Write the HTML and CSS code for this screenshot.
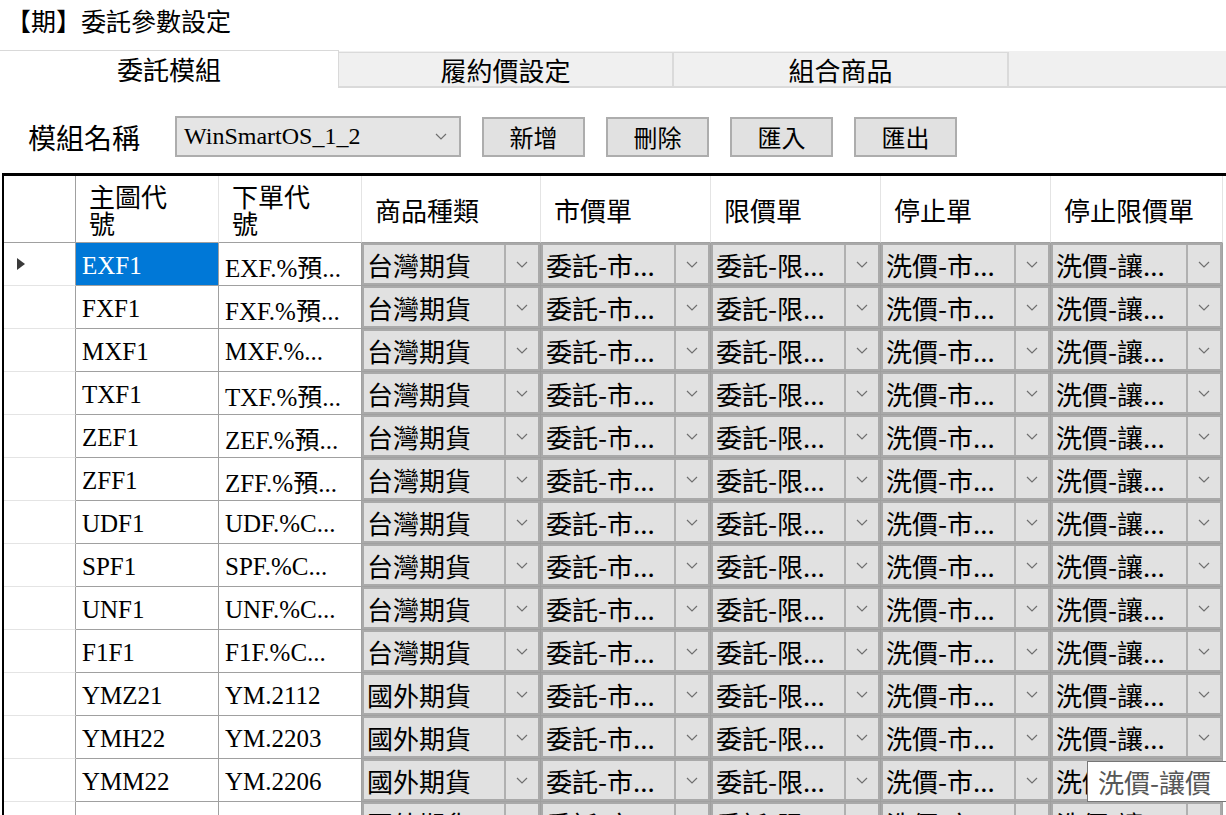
FILE: index.html
```html
<!DOCTYPE html>
<html lang="zh-Hant">
<head>
<meta charset="utf-8">
<title>【期】委託參數設定</title>
<link rel="stylesheet" href="styles.css">
</head>
<body>
<div class="title">【期】委託參數設定</div>
<div class="tabs">
  <div class="tab active">委託模組</div>
  <div class="tabrest">
    <div class="tab">履約價設定</div>
    <div class="tab">組合商品</div>
  </div>
</div>
<div class="toolbar">
  <span class="label">模組名稱</span>
  <div class="select"><span class="select-text">WinSmartOS_1_2</span><svg class="chev" viewBox="0 0 12 7" width="12" height="7"><polyline points="1,1 6,6 11,1"/></svg></div>
  <button class="btn">新增</button>
  <button class="btn">刪除</button>
  <button class="btn">匯入</button>
  <button class="btn">匯出</button>
</div>
<div class="grid">
  <div class="c h rh"></div>
  <div class="c h">主圖代<br>號</div>
  <div class="c h">下單代<br>號</div>
  <div class="c h">商品種類</div>
  <div class="c h">市價單</div>
  <div class="c h">限價單</div>
  <div class="c h">停止單</div>
  <div class="c h">停止限價單</div>

  <div class="c rh"><svg class="rowarrow" viewBox="0 0 8 12" width="8" height="12"><polygon points="0,0 8,6 0,12"/></svg></div>
  <div class="c code sel">EXF1</div>
  <div class="c code">EXF.%預...</div>
  <div class="c cb"><div class="combo"><span class="ct">台灣期貨</span><span class="arr"><svg viewBox="0 0 12 7" width="12" height="7"><polyline points="1,1 6,6 11,1"/></svg></span></div></div>
  <div class="c cb"><div class="combo"><span class="ct">委託-市...</span><span class="arr"><svg viewBox="0 0 12 7" width="12" height="7"><polyline points="1,1 6,6 11,1"/></svg></span></div></div>
  <div class="c cb"><div class="combo"><span class="ct">委託-限...</span><span class="arr"><svg viewBox="0 0 12 7" width="12" height="7"><polyline points="1,1 6,6 11,1"/></svg></span></div></div>
  <div class="c cb"><div class="combo"><span class="ct">洗價-市...</span><span class="arr"><svg viewBox="0 0 12 7" width="12" height="7"><polyline points="1,1 6,6 11,1"/></svg></span></div></div>
  <div class="c cb"><div class="combo"><span class="ct">洗價-讓...</span><span class="arr"><svg viewBox="0 0 12 7" width="12" height="7"><polyline points="1,1 6,6 11,1"/></svg></span></div></div>

  <div class="c rh"></div>
  <div class="c code">FXF1</div>
  <div class="c code">FXF.%預...</div>
  <div class="c cb"><div class="combo"><span class="ct">台灣期貨</span><span class="arr"><svg viewBox="0 0 12 7" width="12" height="7"><polyline points="1,1 6,6 11,1"/></svg></span></div></div>
  <div class="c cb"><div class="combo"><span class="ct">委託-市...</span><span class="arr"><svg viewBox="0 0 12 7" width="12" height="7"><polyline points="1,1 6,6 11,1"/></svg></span></div></div>
  <div class="c cb"><div class="combo"><span class="ct">委託-限...</span><span class="arr"><svg viewBox="0 0 12 7" width="12" height="7"><polyline points="1,1 6,6 11,1"/></svg></span></div></div>
  <div class="c cb"><div class="combo"><span class="ct">洗價-市...</span><span class="arr"><svg viewBox="0 0 12 7" width="12" height="7"><polyline points="1,1 6,6 11,1"/></svg></span></div></div>
  <div class="c cb"><div class="combo"><span class="ct">洗價-讓...</span><span class="arr"><svg viewBox="0 0 12 7" width="12" height="7"><polyline points="1,1 6,6 11,1"/></svg></span></div></div>

  <div class="c rh"></div>
  <div class="c code">MXF1</div>
  <div class="c code">MXF.%...</div>
  <div class="c cb"><div class="combo"><span class="ct">台灣期貨</span><span class="arr"><svg viewBox="0 0 12 7" width="12" height="7"><polyline points="1,1 6,6 11,1"/></svg></span></div></div>
  <div class="c cb"><div class="combo"><span class="ct">委託-市...</span><span class="arr"><svg viewBox="0 0 12 7" width="12" height="7"><polyline points="1,1 6,6 11,1"/></svg></span></div></div>
  <div class="c cb"><div class="combo"><span class="ct">委託-限...</span><span class="arr"><svg viewBox="0 0 12 7" width="12" height="7"><polyline points="1,1 6,6 11,1"/></svg></span></div></div>
  <div class="c cb"><div class="combo"><span class="ct">洗價-市...</span><span class="arr"><svg viewBox="0 0 12 7" width="12" height="7"><polyline points="1,1 6,6 11,1"/></svg></span></div></div>
  <div class="c cb"><div class="combo"><span class="ct">洗價-讓...</span><span class="arr"><svg viewBox="0 0 12 7" width="12" height="7"><polyline points="1,1 6,6 11,1"/></svg></span></div></div>

  <div class="c rh"></div>
  <div class="c code">TXF1</div>
  <div class="c code">TXF.%預...</div>
  <div class="c cb"><div class="combo"><span class="ct">台灣期貨</span><span class="arr"><svg viewBox="0 0 12 7" width="12" height="7"><polyline points="1,1 6,6 11,1"/></svg></span></div></div>
  <div class="c cb"><div class="combo"><span class="ct">委託-市...</span><span class="arr"><svg viewBox="0 0 12 7" width="12" height="7"><polyline points="1,1 6,6 11,1"/></svg></span></div></div>
  <div class="c cb"><div class="combo"><span class="ct">委託-限...</span><span class="arr"><svg viewBox="0 0 12 7" width="12" height="7"><polyline points="1,1 6,6 11,1"/></svg></span></div></div>
  <div class="c cb"><div class="combo"><span class="ct">洗價-市...</span><span class="arr"><svg viewBox="0 0 12 7" width="12" height="7"><polyline points="1,1 6,6 11,1"/></svg></span></div></div>
  <div class="c cb"><div class="combo"><span class="ct">洗價-讓...</span><span class="arr"><svg viewBox="0 0 12 7" width="12" height="7"><polyline points="1,1 6,6 11,1"/></svg></span></div></div>

  <div class="c rh"></div>
  <div class="c code">ZEF1</div>
  <div class="c code">ZEF.%預...</div>
  <div class="c cb"><div class="combo"><span class="ct">台灣期貨</span><span class="arr"><svg viewBox="0 0 12 7" width="12" height="7"><polyline points="1,1 6,6 11,1"/></svg></span></div></div>
  <div class="c cb"><div class="combo"><span class="ct">委託-市...</span><span class="arr"><svg viewBox="0 0 12 7" width="12" height="7"><polyline points="1,1 6,6 11,1"/></svg></span></div></div>
  <div class="c cb"><div class="combo"><span class="ct">委託-限...</span><span class="arr"><svg viewBox="0 0 12 7" width="12" height="7"><polyline points="1,1 6,6 11,1"/></svg></span></div></div>
  <div class="c cb"><div class="combo"><span class="ct">洗價-市...</span><span class="arr"><svg viewBox="0 0 12 7" width="12" height="7"><polyline points="1,1 6,6 11,1"/></svg></span></div></div>
  <div class="c cb"><div class="combo"><span class="ct">洗價-讓...</span><span class="arr"><svg viewBox="0 0 12 7" width="12" height="7"><polyline points="1,1 6,6 11,1"/></svg></span></div></div>

  <div class="c rh"></div>
  <div class="c code">ZFF1</div>
  <div class="c code">ZFF.%預...</div>
  <div class="c cb"><div class="combo"><span class="ct">台灣期貨</span><span class="arr"><svg viewBox="0 0 12 7" width="12" height="7"><polyline points="1,1 6,6 11,1"/></svg></span></div></div>
  <div class="c cb"><div class="combo"><span class="ct">委託-市...</span><span class="arr"><svg viewBox="0 0 12 7" width="12" height="7"><polyline points="1,1 6,6 11,1"/></svg></span></div></div>
  <div class="c cb"><div class="combo"><span class="ct">委託-限...</span><span class="arr"><svg viewBox="0 0 12 7" width="12" height="7"><polyline points="1,1 6,6 11,1"/></svg></span></div></div>
  <div class="c cb"><div class="combo"><span class="ct">洗價-市...</span><span class="arr"><svg viewBox="0 0 12 7" width="12" height="7"><polyline points="1,1 6,6 11,1"/></svg></span></div></div>
  <div class="c cb"><div class="combo"><span class="ct">洗價-讓...</span><span class="arr"><svg viewBox="0 0 12 7" width="12" height="7"><polyline points="1,1 6,6 11,1"/></svg></span></div></div>

  <div class="c rh"></div>
  <div class="c code">UDF1</div>
  <div class="c code">UDF.%C...</div>
  <div class="c cb"><div class="combo"><span class="ct">台灣期貨</span><span class="arr"><svg viewBox="0 0 12 7" width="12" height="7"><polyline points="1,1 6,6 11,1"/></svg></span></div></div>
  <div class="c cb"><div class="combo"><span class="ct">委託-市...</span><span class="arr"><svg viewBox="0 0 12 7" width="12" height="7"><polyline points="1,1 6,6 11,1"/></svg></span></div></div>
  <div class="c cb"><div class="combo"><span class="ct">委託-限...</span><span class="arr"><svg viewBox="0 0 12 7" width="12" height="7"><polyline points="1,1 6,6 11,1"/></svg></span></div></div>
  <div class="c cb"><div class="combo"><span class="ct">洗價-市...</span><span class="arr"><svg viewBox="0 0 12 7" width="12" height="7"><polyline points="1,1 6,6 11,1"/></svg></span></div></div>
  <div class="c cb"><div class="combo"><span class="ct">洗價-讓...</span><span class="arr"><svg viewBox="0 0 12 7" width="12" height="7"><polyline points="1,1 6,6 11,1"/></svg></span></div></div>

  <div class="c rh"></div>
  <div class="c code">SPF1</div>
  <div class="c code">SPF.%C...</div>
  <div class="c cb"><div class="combo"><span class="ct">台灣期貨</span><span class="arr"><svg viewBox="0 0 12 7" width="12" height="7"><polyline points="1,1 6,6 11,1"/></svg></span></div></div>
  <div class="c cb"><div class="combo"><span class="ct">委託-市...</span><span class="arr"><svg viewBox="0 0 12 7" width="12" height="7"><polyline points="1,1 6,6 11,1"/></svg></span></div></div>
  <div class="c cb"><div class="combo"><span class="ct">委託-限...</span><span class="arr"><svg viewBox="0 0 12 7" width="12" height="7"><polyline points="1,1 6,6 11,1"/></svg></span></div></div>
  <div class="c cb"><div class="combo"><span class="ct">洗價-市...</span><span class="arr"><svg viewBox="0 0 12 7" width="12" height="7"><polyline points="1,1 6,6 11,1"/></svg></span></div></div>
  <div class="c cb"><div class="combo"><span class="ct">洗價-讓...</span><span class="arr"><svg viewBox="0 0 12 7" width="12" height="7"><polyline points="1,1 6,6 11,1"/></svg></span></div></div>

  <div class="c rh"></div>
  <div class="c code">UNF1</div>
  <div class="c code">UNF.%C...</div>
  <div class="c cb"><div class="combo"><span class="ct">台灣期貨</span><span class="arr"><svg viewBox="0 0 12 7" width="12" height="7"><polyline points="1,1 6,6 11,1"/></svg></span></div></div>
  <div class="c cb"><div class="combo"><span class="ct">委託-市...</span><span class="arr"><svg viewBox="0 0 12 7" width="12" height="7"><polyline points="1,1 6,6 11,1"/></svg></span></div></div>
  <div class="c cb"><div class="combo"><span class="ct">委託-限...</span><span class="arr"><svg viewBox="0 0 12 7" width="12" height="7"><polyline points="1,1 6,6 11,1"/></svg></span></div></div>
  <div class="c cb"><div class="combo"><span class="ct">洗價-市...</span><span class="arr"><svg viewBox="0 0 12 7" width="12" height="7"><polyline points="1,1 6,6 11,1"/></svg></span></div></div>
  <div class="c cb"><div class="combo"><span class="ct">洗價-讓...</span><span class="arr"><svg viewBox="0 0 12 7" width="12" height="7"><polyline points="1,1 6,6 11,1"/></svg></span></div></div>

  <div class="c rh"></div>
  <div class="c code">F1F1</div>
  <div class="c code">F1F.%C...</div>
  <div class="c cb"><div class="combo"><span class="ct">台灣期貨</span><span class="arr"><svg viewBox="0 0 12 7" width="12" height="7"><polyline points="1,1 6,6 11,1"/></svg></span></div></div>
  <div class="c cb"><div class="combo"><span class="ct">委託-市...</span><span class="arr"><svg viewBox="0 0 12 7" width="12" height="7"><polyline points="1,1 6,6 11,1"/></svg></span></div></div>
  <div class="c cb"><div class="combo"><span class="ct">委託-限...</span><span class="arr"><svg viewBox="0 0 12 7" width="12" height="7"><polyline points="1,1 6,6 11,1"/></svg></span></div></div>
  <div class="c cb"><div class="combo"><span class="ct">洗價-市...</span><span class="arr"><svg viewBox="0 0 12 7" width="12" height="7"><polyline points="1,1 6,6 11,1"/></svg></span></div></div>
  <div class="c cb"><div class="combo"><span class="ct">洗價-讓...</span><span class="arr"><svg viewBox="0 0 12 7" width="12" height="7"><polyline points="1,1 6,6 11,1"/></svg></span></div></div>

  <div class="c rh"></div>
  <div class="c code">YMZ21</div>
  <div class="c code">YM.2112</div>
  <div class="c cb"><div class="combo"><span class="ct">國外期貨</span><span class="arr"><svg viewBox="0 0 12 7" width="12" height="7"><polyline points="1,1 6,6 11,1"/></svg></span></div></div>
  <div class="c cb"><div class="combo"><span class="ct">委託-市...</span><span class="arr"><svg viewBox="0 0 12 7" width="12" height="7"><polyline points="1,1 6,6 11,1"/></svg></span></div></div>
  <div class="c cb"><div class="combo"><span class="ct">委託-限...</span><span class="arr"><svg viewBox="0 0 12 7" width="12" height="7"><polyline points="1,1 6,6 11,1"/></svg></span></div></div>
  <div class="c cb"><div class="combo"><span class="ct">洗價-市...</span><span class="arr"><svg viewBox="0 0 12 7" width="12" height="7"><polyline points="1,1 6,6 11,1"/></svg></span></div></div>
  <div class="c cb"><div class="combo"><span class="ct">洗價-讓...</span><span class="arr"><svg viewBox="0 0 12 7" width="12" height="7"><polyline points="1,1 6,6 11,1"/></svg></span></div></div>

  <div class="c rh"></div>
  <div class="c code">YMH22</div>
  <div class="c code">YM.2203</div>
  <div class="c cb"><div class="combo"><span class="ct">國外期貨</span><span class="arr"><svg viewBox="0 0 12 7" width="12" height="7"><polyline points="1,1 6,6 11,1"/></svg></span></div></div>
  <div class="c cb"><div class="combo"><span class="ct">委託-市...</span><span class="arr"><svg viewBox="0 0 12 7" width="12" height="7"><polyline points="1,1 6,6 11,1"/></svg></span></div></div>
  <div class="c cb"><div class="combo"><span class="ct">委託-限...</span><span class="arr"><svg viewBox="0 0 12 7" width="12" height="7"><polyline points="1,1 6,6 11,1"/></svg></span></div></div>
  <div class="c cb"><div class="combo"><span class="ct">洗價-市...</span><span class="arr"><svg viewBox="0 0 12 7" width="12" height="7"><polyline points="1,1 6,6 11,1"/></svg></span></div></div>
  <div class="c cb"><div class="combo"><span class="ct">洗價-讓...</span><span class="arr"><svg viewBox="0 0 12 7" width="12" height="7"><polyline points="1,1 6,6 11,1"/></svg></span></div></div>

  <div class="c rh"></div>
  <div class="c code">YMM22</div>
  <div class="c code">YM.2206</div>
  <div class="c cb"><div class="combo"><span class="ct">國外期貨</span><span class="arr"><svg viewBox="0 0 12 7" width="12" height="7"><polyline points="1,1 6,6 11,1"/></svg></span></div></div>
  <div class="c cb"><div class="combo"><span class="ct">委託-市...</span><span class="arr"><svg viewBox="0 0 12 7" width="12" height="7"><polyline points="1,1 6,6 11,1"/></svg></span></div></div>
  <div class="c cb"><div class="combo"><span class="ct">委託-限...</span><span class="arr"><svg viewBox="0 0 12 7" width="12" height="7"><polyline points="1,1 6,6 11,1"/></svg></span></div></div>
  <div class="c cb"><div class="combo"><span class="ct">洗價-市...</span><span class="arr"><svg viewBox="0 0 12 7" width="12" height="7"><polyline points="1,1 6,6 11,1"/></svg></span></div></div>
  <div class="c cb"><div class="combo"><span class="ct">洗價-讓...</span><span class="arr"><svg viewBox="0 0 12 7" width="12" height="7"><polyline points="1,1 6,6 11,1"/></svg></span></div></div>

  <div class="c rh"></div>
  <div class="c code"></div>
  <div class="c code"></div>
  <div class="c cb"><div class="combo"><span class="ct">國外期貨</span><span class="arr"><svg viewBox="0 0 12 7" width="12" height="7"><polyline points="1,1 6,6 11,1"/></svg></span></div></div>
  <div class="c cb"><div class="combo"><span class="ct">委託-市...</span><span class="arr"><svg viewBox="0 0 12 7" width="12" height="7"><polyline points="1,1 6,6 11,1"/></svg></span></div></div>
  <div class="c cb"><div class="combo"><span class="ct">委託-限...</span><span class="arr"><svg viewBox="0 0 12 7" width="12" height="7"><polyline points="1,1 6,6 11,1"/></svg></span></div></div>
  <div class="c cb"><div class="combo"><span class="ct">洗價-市...</span><span class="arr"><svg viewBox="0 0 12 7" width="12" height="7"><polyline points="1,1 6,6 11,1"/></svg></span></div></div>
  <div class="c cb"><div class="combo"><span class="ct">洗價-讓...</span><span class="arr"><svg viewBox="0 0 12 7" width="12" height="7"><polyline points="1,1 6,6 11,1"/></svg></span></div></div>

  <div class="tip">洗價-讓價</div>
</div>
</body>
</html>
```

FILE: styles.css
```css
html, body {
  margin: 0;
  padding: 0;
  background: #fff;
}
body {
  width: 1226px;
  height: 815px;
  overflow: hidden;
  font-family: "Noto Sans CJK TC", "Noto Sans", sans-serif;
  color: #000;
}
.title {
  box-sizing: border-box;
  height: 50px;
  padding: 5px 0 0 6px;
  font-size: 25px;
  line-height: 30px;
}
.tabs {
  display: flex;
  height: 38px;
}
.tab {
  box-sizing: border-box;
  display: flex;
  align-items: center;
  justify-content: center;
  font-size: 26px;
}
.tab.active {
  width: 339px;
  background: #fff;
  border-top: 1px solid #d9d9d9;
  border-right: 1px solid #d9d9d9;
  padding-bottom: 3px;
}
.tabrest {
  flex: 1;
  display: flex;
  align-items: flex-end;
  margin-top: 1px;
  background: #f0f0f0;
  border-bottom: 2px solid #dadada;
}
.tabrest .tab {
  width: 335px;
  height: 34px;
  border-top: 1px solid #dadada;
  border-right: 2px solid #dadada;
}
.toolbar {
  box-sizing: border-box;
  height: 85px;
  padding: 12px 0 0 28px;
  display: flex;
  align-items: center;
}
.label {
  font-size: 28px;
  margin-right: 35px;
}
.select {
  box-sizing: border-box;
  width: 286px;
  height: 41px;
  border: 2px solid #adadad;
  background: #e5e5e5;
  display: flex;
  align-items: center;
  padding-left: 7px;
  font-family: "Liberation Serif", serif;
  font-size: 24px;
}
.chev {
  margin-left: auto;
  margin-right: 12px;
}
.chev polyline, .arr polyline {
  fill: none;
  stroke: #6f6f6f;
  stroke-width: 1.2;
}
.btn {
  box-sizing: border-box;
  width: 103px;
  height: 40px;
  margin-left: 21px;
  padding: 0;
  border: 2px solid #adadad;
  background: #e1e1e1;
  font-family: "Noto Sans CJK TC", sans-serif;
  font-size: 24px;
  color: #000;
}
.grid {
  position: relative;
  margin-left: 2px;
  border-top: 3px solid #000;
  border-left: 2px solid #000;
  height: 639px;
  overflow: hidden;
  display: grid;
  grid-template-columns: 72px 143px 143px 179px 170px 170px 170px 172px;
  grid-template-rows: 67px repeat(14, 43px);
}
.c {
  box-sizing: border-box;
  border-right: 1px solid #a0a0a0;
  border-bottom: 1px solid #a0a0a0;
  display: flex;
  align-items: center;
  overflow: hidden;
  white-space: nowrap;
}
.h {
  font-size: 26px;
  line-height: 27px;
  padding-left: 13px;
  border-right-color: #e4e4e4;
  white-space: normal;
}
.h.rh {
  border-right-color: #a0a0a0;
  border-bottom-color: #a0a0a0;
}
.rh {
  border-bottom-color: #e4e4e4;
  padding-left: 13px;
}
.rowarrow polygon {
  fill: #3a3a3a;
}
.code {
  font-family: "Liberation Serif", "Noto Sans CJK TC", serif;
  font-size: 25px;
  padding-left: 6px;
  padding-top: 4px;
}
.sel {
  background: #0078d7;
  color: #fff;
}
.cb {
  align-items: stretch;
}
.combo {
  flex: 1;
  display: flex;
  box-sizing: border-box;
  border: 2px solid #a9a9a9;
  background: #e1e1e1;
  font-size: 26px;
  min-width: 0;
}
.ct {
  flex: 1;
  display: flex;
  align-items: center;
  padding-left: 3px;
  overflow: hidden;
}
.arr {
  width: 32px;
  flex: none;
  border-left: 2px solid #b0b0b0;
  display: flex;
  align-items: center;
  justify-content: center;
}
.tip {
  position: absolute;
  left: 1083px;
  top: 585px;
  width: 150px;
  height: 41px;
  box-sizing: border-box;
  border: 1px solid #767676;
  background: #fff;
  color: #575757;
  font-size: 26px;
  padding-left: 10px;
  display: flex;
  align-items: center;
}
```
